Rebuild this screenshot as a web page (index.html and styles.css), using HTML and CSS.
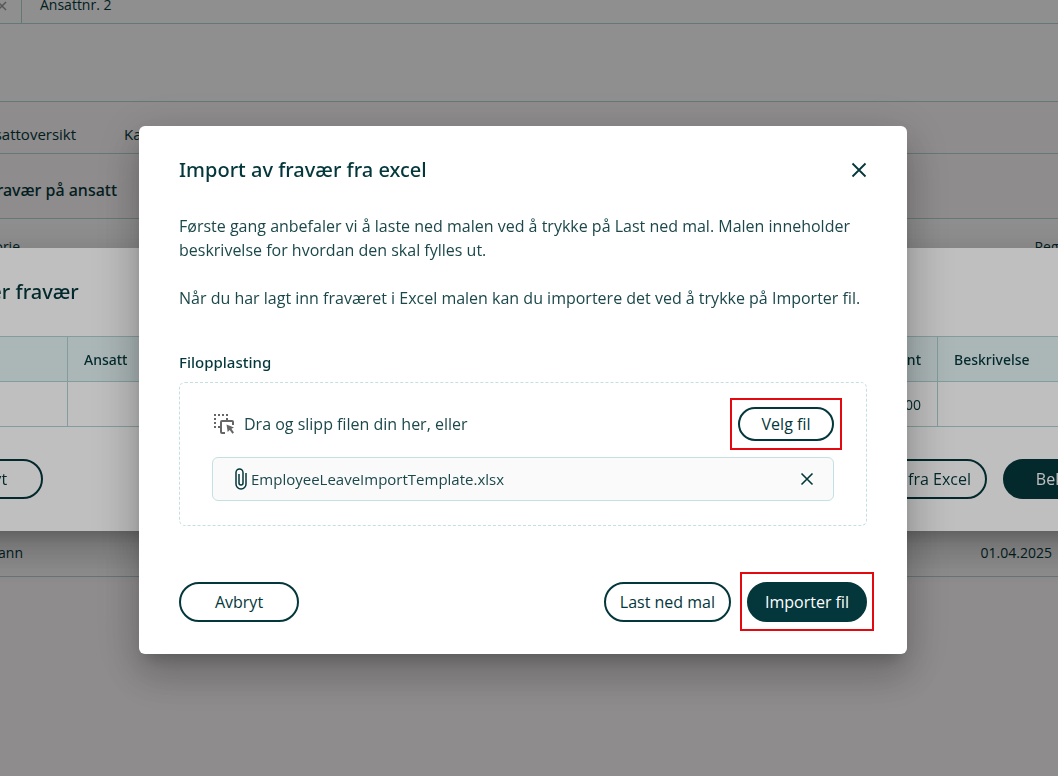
FILE: index.html
```
<!DOCTYPE html>
<html lang="no">
<head>
<meta charset="utf-8">
<title>Import av fravær fra excel</title>
<link rel="stylesheet" href="styles.css">
</head>
<body>
<div class="page">
  <header class="tabs">
    <div class="tab tab-first">
      <button class="icon-button" type="button" aria-label="Lukk fane">
        <svg width="10" height="10" viewBox="0 0 10 10" fill="none" stroke="currentColor" stroke-width="1.5"><path d="M1 1l8 8M9 1L1 9"/></svg>
      </button>
    </div>
    <div class="tab">Ansattnr. 2</div>
  </header>
  <div class="banner"></div>
  <nav class="subnav">
    <a href="#">Ansattoversikt</a>
    <a href="#">Kalender</a>
  </nav>
  <h1 class="page-title">Fravær på ansatt</h1>
  <table class="list">
    <thead><tr><th class="list-name">Kategorie</th><th class="list-date">Registrert</th></tr></thead>
    <tbody><tr><td class="list-name">Mann</td><td class="list-date">01.04.2025</td></tr></tbody>
  </table>
</div>

<div class="overlay overlay-back">
  <section class="dialog dialog-wide" aria-label="Registrer fravær">
    <h2 class="dialog-title">Registrer fravær</h2>
    <table class="grid">
      <thead><tr><th class="grid-type"></th><th>Ansatt</th><th class="grid-percent">Prosent</th><th class="grid-text">Beskrivelse</th></tr></thead>
      <tbody><tr><td></td><td></td><td class="grid-percent">100,00</td><td></td></tr></tbody>
    </table>
    <div class="actions">
      <button class="button" type="button">Avbryt</button>
      <div class="actions-end">
        <button class="button" type="button">Importer fra Excel</button>
        <button class="button button-primary" type="button">Bekreft</button>
      </div>
    </div>
  </section>
</div>

<div class="overlay">
  <section class="dialog dialog-import" role="dialog" aria-modal="true" aria-labelledby="import-title">
    <div class="dialog-head">
      <h2 class="dialog-title" id="import-title">Import av fravær fra excel</h2>
      <button class="icon-button" type="button" aria-label="Lukk">
        <svg width="16" height="16" viewBox="0 0 16 16" fill="none" stroke="currentColor" stroke-width="1.800"><path d="M1.5 1.5l13 13M14.5 1.5l-13 13"/></svg>
      </button>
    </div>
    <div class="copy">
      <p>Første gang anbefaler vi å laste ned malen ved å trykke på Last ned mal. Malen inneholder beskrivelse for hvordan den skal fylles ut.</p>
      <p>Når du har lagt inn fraværet i Excel malen kan du importere det ved å trykke på Importer fil.</p>
    </div>
    <h3 class="label">Filopplasting</h3>
    <div class="dropzone">
      <div class="drop-row">
        <svg class="drop-icon" width="24" height="24" viewBox="0 0 24 24" aria-hidden="true">
          <path fill="currentColor" d="M2 2h2v2H2zM6 2h2v2H6zM10 2h2v2h-2zM14 2h2v2h-2zM2 6h2v2H2zM2 10h2v2H2zM2 14h2v2H2zM6 14h2v2H6zM14 6h2v2h-2zM14.500 12.500l7.500 3-2.600 1.300 2.600 3.700-1.600 1.200-2.700-3.700-2 2z"/>
          <path fill="none" stroke="currentColor" stroke-width="2" d="M13 21H10q-1 0-1-1V10q0-1 1-1h10q1 0 1 1v3"/>
        </svg>
        <span class="drop-text">Dra og slipp filen din her, eller</span>
        <span class="marked marked-small"><button class="button button-small" type="button">Velg fil</button></span>
      </div>
      <div class="file">
        <svg width="12" height="22" viewBox="0 0 12 22" fill="none" stroke="currentColor" stroke-width="1.500" aria-hidden="true"><path d="M11 5v11a5 5 0 0 1-10 0V4.500a3.500 3.500 0 0 1 7 0V15a2 2 0 0 1-4 0V6"/></svg>
        <span class="file-name">EmployeeLeaveImportTemplate.xlsx</span>
        <button class="icon-button" type="button" aria-label="Fjern fil">
          <svg width="14" height="14" viewBox="0 0 14 14" fill="none" stroke="currentColor" stroke-width="1.600"><path d="M1.500 1.500l11 11M12.500 1.500l-11 11"/></svg>
        </button>
      </div>
    </div>
    <div class="actions">
      <button class="button" type="button">Avbryt</button>
      <div class="actions-end">
        <button class="button" type="button">Last ned mal</button>
        <span class="marked"><button class="button button-primary" type="button">Importer fil</button></span>
      </div>
    </div>
  </section>
</div>
</body>
</html>
```
FILE: styles.css
```
* { box-sizing: border-box; }

body {
  margin: 0;
  min-height: 100vh;
  overflow: hidden;
  background: #fdf9f9;
  color: #04373b;
  font-family: "Open Sans", "Noto Sans", sans-serif;
  font-size: 16px;
  line-height: 24px;
}

h1, h2, h3, p { margin: 0; }

/* Page behind the dialogs */
.page { margin: 0 -48px 0 -60px; font-size: 14px; }

.tabs {
  display: flex;
  height: 24px;
  background: #fff;
  border-bottom: 1px solid #b4d4d2;
}
.tab { height: 23px; padding: 0 18px; line-height: 10px; }
.tab-first {
  display: flex;
  justify-content: flex-end;
  width: 82px;
  padding: 1px 14px 0 0;
  color: #999;
  border-right: 1px solid #b4d4d2;
}
.banner { height: 78px; background: #fff; border-bottom: 1px solid #b4d4d2; }

.subnav {
  display: flex;
  gap: 48px;
  padding: 20px 36px 7px;
  border-bottom: 1px solid #b4d4d2;
  font-size: 15px;
}
.subnav a { color: inherit; text-decoration: none; }

.page-title {
  padding: 24px 48px 16px;
  border-bottom: 1px solid #b4d4d2;
  font-size: 16px;
}

.page-title, .dialog-title, .label {
  font-family: "Noto Sans", "Open Sans", sans-serif;
  font-weight: 500;
}

.list { width: 100%; border-collapse: collapse; background: #fff; }
.list th, .list td {
  height: 48px;
  padding: 2px 7px 0;
  border-bottom: 1px solid #b4d4d2;
  font-weight: 400;
  text-align: left;
}
.list th { height: 309px; padding-top: 16px; vertical-align: top; }
.list .list-name { width: 90px; text-align: right; }
.list .list-date { padding-right: 54px; text-align: right; }
.list th.list-name { padding-right: 10px; }
.list th.list-date { padding-right: 8px; }

/* Dialog layers */
.overlay {
  position: fixed;
  inset: 0;
  display: flex;
  align-items: center;
  justify-content: center;
  padding: 4px 12px 0 0;
  background: rgba(0, 0, 0, 0.25);
}
.overlay-back { padding-top: 3px; }

.dialog {
  flex: none;
  padding: 28px 40px 32px;
  border-radius: 6px;
  background: #fff;
  box-shadow: 0 11px 15px -7px rgba(0, 0, 0, 0.2),
    0 24px 38px 3px rgba(0, 0, 0, 0.14),
    0 9px 46px 8px rgba(0, 0, 0, 0.12);
}
.dialog-wide { width: 1280px; }
.dialog-import { width: 768px; }

.dialog-head { display: flex; align-items: center; justify-content: space-between; }
.dialog-title { font-size: 20px; line-height: 32px; }

.icon-button {
  display: flex;
  padding: 0;
  border: 0;
  background: none;
  color: inherit;
  cursor: pointer;
}

/* Absence grid */
.grid {
  width: 100%;
  margin: 28px 0 32px;
  border-collapse: collapse;
  table-layout: fixed;
  font-size: 14px;
}
.grid th, .grid td {
  height: 45px;
  padding: 2px 16px 0;
  border: 1px solid #b0d2d0;
  text-align: left;
}
.grid th {
  background: #e4f3f5;
  font-family: "Noto Sans", "Open Sans", sans-serif;
  font-weight: 500;
}
.grid .grid-type { width: 144px; }
.grid .grid-percent { text-align: right; }
.grid .grid-text { width: 185px; }

/* Import dialog */
.copy { display: grid; gap: 24px; margin: 28px 0 40px; color: #1c484b; }
.label { margin-bottom: 8px; font-size: 15px; }

.dropzone {
  display: grid;
  gap: 16px;
  padding: 24px 32px;
  border: 1px dashed #c5dfdf;
  border-radius: 6px;
}
.drop-row { display: flex; align-items: center; gap: 8px; }
.drop-icon { color: #666; }
.drop-text { flex: 1; color: #1c484b; }

.file {
  display: flex;
  align-items: center;
  gap: 4px;
  height: 44px;
  padding: 0 19px 0 22px;
  border: 1px solid #c5e0e2;
  border-radius: 6px;
  background: #fafafa;
  font-size: 15px;
}
.file-name { flex: 1; color: #1c484b; }

/* Buttons */
.actions { display: flex; justify-content: space-between; }
.dialog-import .actions { margin-top: 56px; }
.actions-end { display: flex; gap: 16px; }

.button {
  min-width: 120px;
  height: 40px;
  padding: 0 14px;
  border: 2px solid #04373b;
  border-radius: 20px;
  background: #fff;
  color: #04373b;
  font: inherit;
  cursor: pointer;
}
.dialog-wide .button { background: none; }
.button-primary, .dialog-wide .button-primary { background: #04373b; color: #fff; }
.button-small { min-width: 96px; height: 34px; }

/* Red highlight frame around a control */
.marked { position: relative; display: flex; }
.marked::after {
  content: "";
  position: absolute;
  inset: -10px -7px -9px;
  border: 2px solid #e3090e;
  pointer-events: none;
}
.marked-small::after { inset: -9px -8px; }
```
